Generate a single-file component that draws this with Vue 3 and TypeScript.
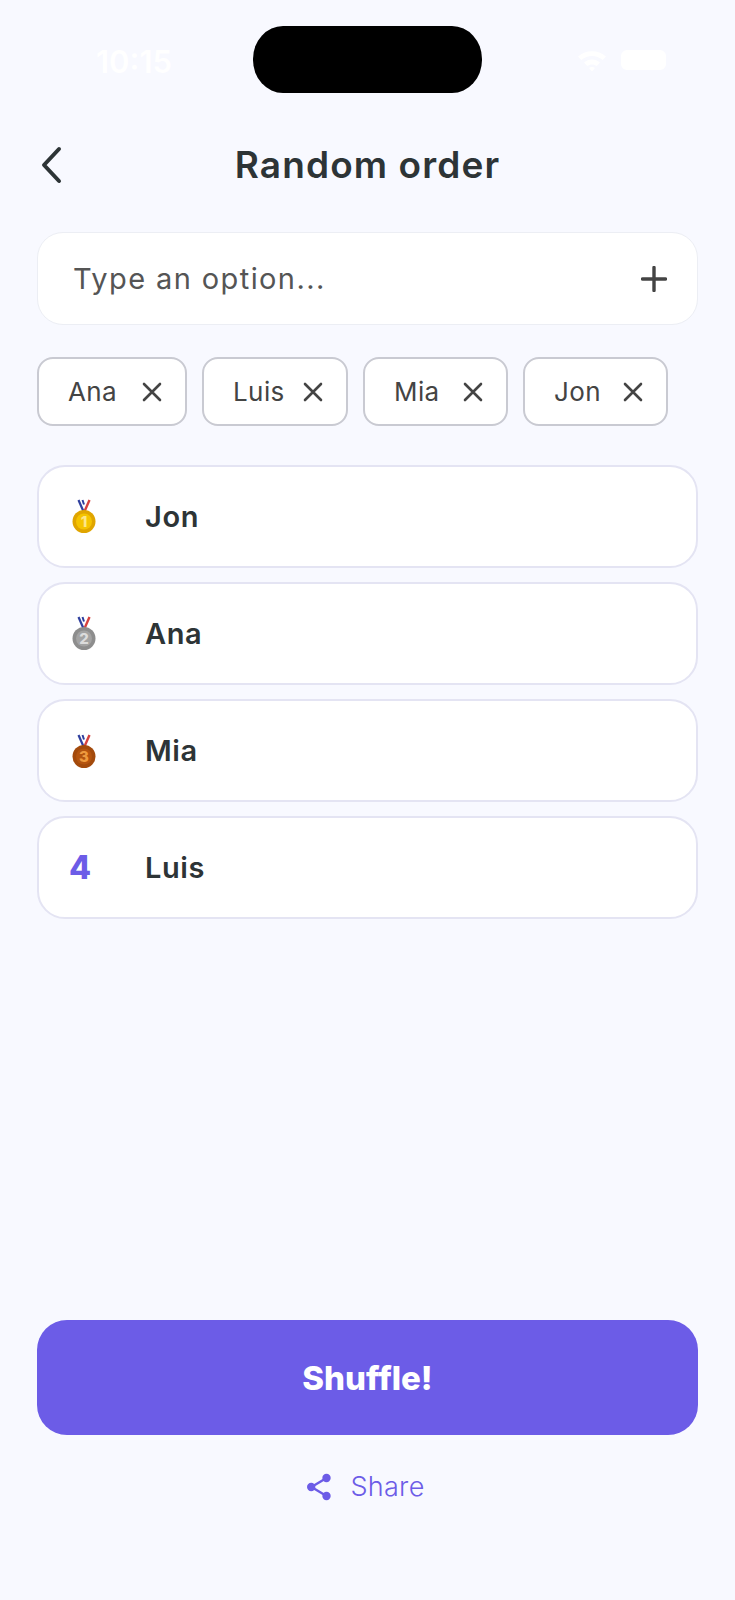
<template>
    <div class="screen">
        <!-- Status bar (white on near white, as in the app) -->
        <div class="status-bar">
            <span class="clock">10:15</span>
            <div class="island" />
            <div class="status-icons">
                <svg class="wifi" viewBox="0 0 30 24" width="30" height="24">
                    <path d="M1 8.5C9 1.5 21 1.5 29 8.5L25.6 12C19.5 6.8 10.5 6.8 4.4 12Z" />
                    <path d="M7 14.5C11.6 10.6 18.4 10.6 23 14.5L19.6 18C17 15.9 13 15.9 10.4 18Z" />
                    <path d="M12 20C13.8 18.6 16.2 18.6 18 20L15 23.5Z" />
                </svg>
                <div class="battery" />
            </div>
        </div>

        <header class="top-bar">
            <svg class="back" viewBox="0 0 24 38" width="24" height="38" fill="none">
                <path d="M21 3L6 19L21 35" />
            </svg>
            <h1>Random order</h1>
        </header>

        <div class="option-input">
            <span class="placeholder">Type an option...</span>
            <svg viewBox="0 0 26 26" width="26" height="26" class="plus">
                <path d="M13 1.5V24.5M1.5 13H24.5" />
            </svg>
        </div>

        <div class="chips">
            <div v-for="name in OPTIONS" :key="name" class="chip">
                <span>{{ name }}</span>
                <svg viewBox="0 0 20 20" width="20" height="20" class="chip-x">
                    <path d="M2 2L18 18M18 2L2 18" />
                </svg>
            </div>
        </div>

        <ul class="results">
            <li v-for="(item, idx) in RESULTS" :key="item" class="result">
                <div class="rank">
                    <svg v-if="idx < 3" viewBox="0 0 24 34" width="24" height="34">
                        <path d="M6.5 1L11.5 12.5" fill="none" stroke="#2f3f9e" stroke-width="2.2" />
                        <path d="M10.5 1L12 5.5" fill="none" stroke="#2f3f9e" stroke-width="2" />
                        <path d="M17.5 1L12.5 12.5" fill="none" stroke="#d6423f" stroke-width="2.4" />
                        <circle cx="12" cy="22.5" r="11.5" :fill="MEDALS[idx].rim" />
                        <circle cx="12" cy="22.5" r="8" :fill="MEDALS[idx].face" />
                        <text x="12" y="28" text-anchor="middle" class="medal-num" :fill="MEDALS[idx].num">{{ idx + 1 }}</text>
                    </svg>
                    <span v-else class="rank-num">{{ idx + 1 }}</span>
                </div>
                <span class="result-name">{{ item }}</span>
            </li>
        </ul>

        <div class="bottom">
            <button class="shuffle">Shuffle!</button>
            <div class="share">
                <svg viewBox="0 0 26 28" width="26" height="28">
                    <path d="M20.5 5L5.5 14L20.5 23" fill="none" stroke="#6c5ce7" stroke-width="2.4" />
                    <circle cx="20.5" cy="5" r="4.2" />
                    <circle cx="5.2" cy="14" r="4.2" />
                    <circle cx="20.5" cy="23" r="4.2" />
                </svg>
                <span>Share</span>
            </div>
        </div>
    </div>
</template>

<script setup lang="ts">
const OPTIONS = ['Ana', 'Luis', 'Mia', 'Jon']
const RESULTS = ['Jon', 'Ana', 'Mia', 'Luis']

const MEDALS = [
    { rim: '#e0a500', face: '#f5c400', num: '#fde68a' },
    { rim: '#8d8d8d', face: '#a3a3a3', num: '#dcdcdc' },
    { rim: '#a34a0c', face: '#b4540f', num: '#ee9a3e' }
]
</script>

<style>
html,
body {
    margin: 0;
    background: #f8f9ff;
}
</style>

<style scoped>
.screen {
    box-sizing: border-box;
    height: 1600px;
    padding: 0 37px;
    display: flex;
    flex-direction: column;
    background: #f8f9ff;
    color: #2d3436;
    font-family: Inter, "Open Sans", sans-serif;
    overflow: hidden;
}

/* Status bar */
.status-bar {
    height: 93px;
    padding-top: 26px;
    box-sizing: border-box;
    display: flex;
    justify-content: center;
    position: relative;
    flex: none;
}

.island {
    width: 229px;
    height: 67px;
    background: #000;
    border-radius: 30px / 33px;
}

.clock {
    position: absolute;
    left: 59px;
    top: 43px;
    font-size: 31px;
    font-weight: 600;
    color: #fff;
}

.status-icons {
    position: absolute;
    left: 540px;
    top: 48px;
    display: flex;
    align-items: center;
    gap: 14px;
}

.wifi {
    fill: #fff;
}

.battery {
    width: 45px;
    height: 20px;
    border-radius: 6px;
    background: #fff;
}

/* Header */
.top-bar {
    height: 68px;
    margin-top: 37px;
    display: flex;
    align-items: center;
    justify-content: center;
    position: relative;
    flex: none;
}

.top-bar h1 {
    margin: 0;
    font-size: 37px;
    font-weight: 600;
    letter-spacing: 1.1px;
}

.back {
    position: absolute;
    left: 1px;
    top: 16px;
}

.back path {
    stroke: #2d3436;
    stroke-width: 4;
    stroke-linecap: round;
    stroke-linejoin: round;
}

/* Input */
.option-input {
    margin-top: 34px;
    height: 93px;
    box-sizing: border-box;
    flex: none;
    padding: 0 30px 0 35px;
    display: flex;
    align-items: center;
    justify-content: space-between;
    background: #fff;
    border: 1.5px solid #eceef4;
    border-radius: 26px;
}

.placeholder {
    font-size: 29px;
    letter-spacing: 1.4px;
    color: #555;
}

.plus path {
    stroke: #444;
    stroke-width: 3.4;
    stroke-linecap: round;
}

/* Chips */
.chips {
    margin-top: 32px;
    display: grid;
    grid-template-columns: 150px 146px 145px 145px;
    gap: 15px;
    flex: none;
}

.chip {
    height: 69px;
    box-sizing: border-box;
    padding: 0 23px 0 29px;
    display: flex;
    align-items: center;
    justify-content: space-between;
    background: #fff;
    border: 2px solid #c9cad2;
    border-radius: 16px;
    font-size: 26px;
    letter-spacing: 0.4px;
    color: #444;
}

.chip-x path {
    stroke: #444;
    stroke-width: 2.6;
    stroke-linecap: round;
}

/* Results */
.results {
    list-style: none;
    margin: 38.5px 0 0;
    padding: 0;
    display: flex;
    flex-direction: column;
    gap: 14.3px;
    flex: none;
}

.result {
    height: 103px;
    box-sizing: border-box;
    display: flex;
    align-items: center;
    background: #fff;
    border: 2px solid #e4e4f3;
    border-radius: 28px;
}

.rank {
    width: 106px;
    padding-left: 33px;
    box-sizing: border-box;
    display: flex;
    align-items: center;
    flex: none;
}

.rank:has(.rank-num) {
    padding-left: 30px;
}

.medal-num {
    font-size: 15px;
    font-weight: 800;
    font-family: Inter, sans-serif;
}

.rank-num {
    font-size: 32px;
    font-weight: 800;
    color: #6c5ce7;
}

.result-name {
    font-size: 29px;
    font-weight: 600;
    letter-spacing: 0.6px;
}

/* Bottom actions */
.bottom {
    margin-top: auto;
    padding-bottom: 97px;
    display: flex;
    flex-direction: column;
    align-items: center;
}

.shuffle {
    width: 100%;
    height: 115px;
    border: none;
    border-radius: 30px;
    background: #6c5ce7;
    color: #fff;
    font-family: inherit;
    font-size: 33px;
    font-weight: 800;
}

.share {
    margin-top: 35px;
    padding-right: 4px;
    display: flex;
    align-items: center;
    gap: 18px;
    color: #6c5ce7;
    font-size: 27px;
    font-weight: 300;
    letter-spacing: 0.3px;
}

.share svg {
    fill: #6c5ce7;
}
</style>
